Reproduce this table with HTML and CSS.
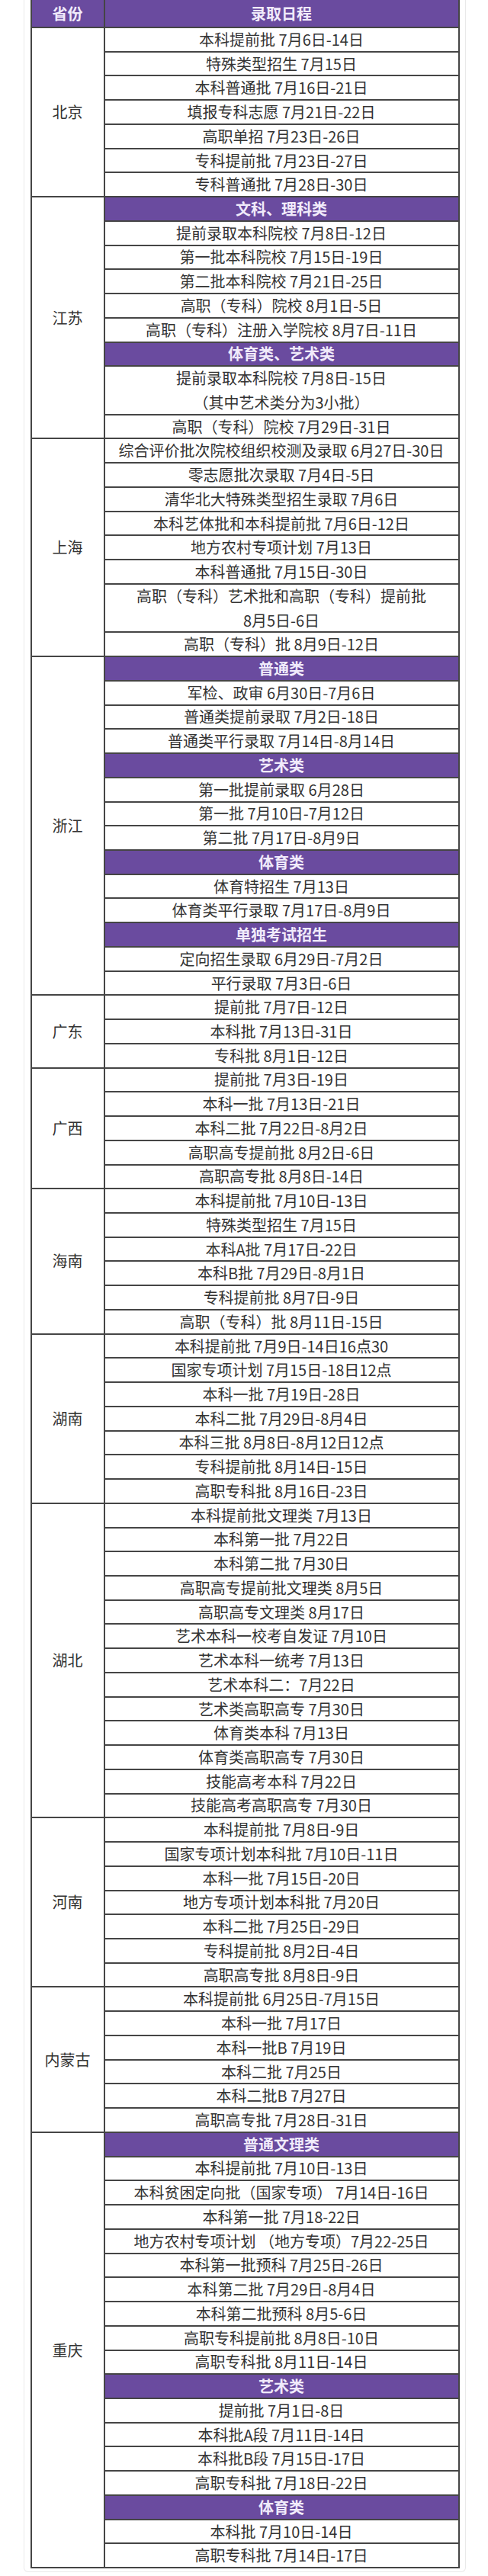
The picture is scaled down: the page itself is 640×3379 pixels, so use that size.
FILE: index.html
```html
<!DOCTYPE html>
<html lang="zh-CN">
<head>
<meta charset="utf-8">
<title>各省录取日程</title>
<link rel="stylesheet" href="styles.css">
</head>
<body>
<div class="card">
  <div class="sheet">
    <div class="h p-h">省份</div>
    <div class="h c-h">录取日程</div>

    <div class="p r7">北京</div>
    <div class="c">本科提前批 7月6日-14日</div>
    <div class="c">特殊类型招生 7月15日</div>
    <div class="c">本科普通批 7月16日-21日</div>
    <div class="c">填报专科志愿 7月21日-22日</div>
    <div class="c">高职单招 7月23日-26日</div>
    <div class="c">专科提前批 7月23日-27日</div>
    <div class="c">专科普通批 7月28日-30日</div>

    <div class="p r10">江苏</div>
    <div class="c sub">文科、理科类</div>
    <div class="c">提前录取本科院校 7月8日-12日</div>
    <div class="c">第一批本科院校 7月15日-19日</div>
    <div class="c">第二批本科院校 7月21日-25日</div>
    <div class="c">高职（专科）院校 8月1日-5日</div>
    <div class="c">高职（专科）注册入学院校 8月7日-11日</div>
    <div class="c sub">体育类、艺术类</div>
    <div class="c dbl">提前录取本科院校 7月8日-15日<br>（其中艺术类分为3小批）</div>
    <div class="c">高职（专科）院校 7月29日-31日</div>

    <div class="p r9">上海</div>
    <div class="c">综合评价批次院校组织校测及录取 6月27日-30日</div>
    <div class="c">零志愿批次录取 7月4日-5日</div>
    <div class="c">清华北大特殊类型招生录取 7月6日</div>
    <div class="c">本科艺体批和本科提前批 7月6日-12日</div>
    <div class="c">地方农村专项计划 7月13日</div>
    <div class="c">本科普通批 7月15日-30日</div>
    <div class="c dbl">高职（专科）艺术批和高职（专科）提前批<br>8月5日-6日</div>
    <div class="c">高职（专科）批 8月9日-12日</div>

    <div class="p r14">浙江</div>
    <div class="c sub">普通类</div>
    <div class="c">军检、政审 6月30日-7月6日</div>
    <div class="c">普通类提前录取 7月2日-18日</div>
    <div class="c">普通类平行录取 7月14日-8月14日</div>
    <div class="c sub">艺术类</div>
    <div class="c">第一批提前录取 6月28日</div>
    <div class="c">第一批 7月10日-7月12日</div>
    <div class="c">第二批 7月17日-8月9日</div>
    <div class="c sub">体育类</div>
    <div class="c">体育特招生 7月13日</div>
    <div class="c">体育类平行录取 7月17日-8月9日</div>
    <div class="c sub">单独考试招生</div>
    <div class="c">定向招生录取 6月29日-7月2日</div>
    <div class="c">平行录取 7月3日-6日</div>

    <div class="p r3">广东</div>
    <div class="c">提前批 7月7日-12日</div>
    <div class="c">本科批 7月13日-31日</div>
    <div class="c">专科批 8月1日-12日</div>

    <div class="p r5">广西</div>
    <div class="c">提前批 7月3日-19日</div>
    <div class="c">本科一批 7月13日-21日</div>
    <div class="c">本科二批 7月22日-8月2日</div>
    <div class="c">高职高专提前批 8月2日-6日</div>
    <div class="c">高职高专批 8月8日-14日</div>

    <div class="p r6">海南</div>
    <div class="c">本科提前批 7月10日-13日</div>
    <div class="c">特殊类型招生 7月15日</div>
    <div class="c">本科A批 7月17日-22日</div>
    <div class="c">本科B批 7月29日-8月1日</div>
    <div class="c">专科提前批 8月7日-9日</div>
    <div class="c">高职（专科）批 8月11日-15日</div>

    <div class="p r7">湖南</div>
    <div class="c">本科提前批 7月9日-14日16点30</div>
    <div class="c">国家专项计划 7月15日-18日12点</div>
    <div class="c">本科一批 7月19日-28日</div>
    <div class="c">本科二批 7月29日-8月4日</div>
    <div class="c">本科三批 8月8日-8月12日12点</div>
    <div class="c">专科提前批 8月14日-15日</div>
    <div class="c">高职专科批 8月16日-23日</div>

    <div class="p r13">湖北</div>
    <div class="c">本科提前批文理类 7月13日</div>
    <div class="c">本科第一批 7月22日</div>
    <div class="c">本科第二批 7月30日</div>
    <div class="c">高职高专提前批文理类 8月5日</div>
    <div class="c">高职高专文理类 8月17日</div>
    <div class="c">艺术本科一校考自发证 7月10日</div>
    <div class="c">艺术本科一统考 7月13日</div>
    <div class="c">艺术本科二：7月22日</div>
    <div class="c">艺术类高职高专 7月30日</div>
    <div class="c">体育类本科 7月13日</div>
    <div class="c">体育类高职高专 7月30日</div>
    <div class="c">技能高考本科 7月22日</div>
    <div class="c">技能高考高职高专 7月30日</div>

    <div class="p r7">河南</div>
    <div class="c">本科提前批 7月8日-9日</div>
    <div class="c">国家专项计划本科批 7月10日-11日</div>
    <div class="c">本科一批 7月15日-20日</div>
    <div class="c">地方专项计划本科批 7月20日</div>
    <div class="c">本科二批 7月25日-29日</div>
    <div class="c">专科提前批 8月2日-4日</div>
    <div class="c">高职高专批 8月8日-9日</div>

    <div class="p r6">内蒙古</div>
    <div class="c">本科提前批 6月25日-7月15日</div>
    <div class="c">本科一批 7月17日</div>
    <div class="c">本科一批B 7月19日</div>
    <div class="c">本科二批 7月25日</div>
    <div class="c">本科二批B 7月27日</div>
    <div class="c">高职高专批 7月28日-31日</div>

    <div class="p r18">重庆</div>
    <div class="c sub">普通文理类</div>
    <div class="c">本科提前批 7月10日-13日</div>
    <div class="c">本科贫困定向批（国家专项） 7月14日-16日</div>
    <div class="c">本科第一批 7月18-22日</div>
    <div class="c">地方农村专项计划 （地方专项）7月22-25日</div>
    <div class="c">本科第一批预科 7月25日-26日</div>
    <div class="c">本科第二批 7月29日-8月4日</div>
    <div class="c">本科第二批预科 8月5-6日</div>
    <div class="c">高职专科提前批 8月8日-10日</div>
    <div class="c">高职专科批 8月11日-14日</div>
    <div class="c sub">艺术类</div>
    <div class="c">提前批 7月1日-8日</div>
    <div class="c">本科批A段 7月11日-14日</div>
    <div class="c">本科批B段 7月15日-17日</div>
    <div class="c">高职专科批 7月18日-22日</div>
    <div class="c sub">体育类</div>
    <div class="c">本科批 7月10日-14日</div>
    <div class="c">高职专科批 7月14日-17日</div>
  </div>
</div>
</body>
</html>
```

FILE: styles.css
```css
html, body {
  margin: 0;
  padding: 0;
  background: #ffffff;
}

body {
  font-family: "Noto Sans CJK SC", "Noto Sans", sans-serif;
  color: #333333;
}

.card {
  width: 578px;
  margin-left: 31px;
  border: 1px solid #e9e9e9;
  border-top: none;
  border-radius: 0 0 6px 6px;
  padding-bottom: 4px;
  display: flex;
  justify-content: center;
}

.sheet {
  width: 559px;
  display: grid;
  grid-template-columns: 94px 1fr;
  grid-template-rows: 35px;
  grid-auto-rows: 29.74px;
  gap: 2px;
  padding: 0 2px 2px 2px;
  background: #454545;
}

.h {
  background: #6a4b9f;
  color: #f1ebfb;
  font-weight: 700;
  font-size: 20px;
  display: flex;
  align-items: center;
  justify-content: center;
  line-height: 1;
}

.p {
  grid-column: 1;
  background: #ffffff;
  font-size: 20px;
  display: flex;
  align-items: center;
  justify-content: center;
  line-height: 1;
}

.c {
  grid-column: 2;
  background: #ffffff;
  font-size: 20px;
  display: flex;
  align-items: center;
  justify-content: center;
  text-align: center;
  white-space: nowrap;
  line-height: 1;
}

.c.sub {
  background: #6a4b9f;
  color: #f1ebfb;
  font-weight: 700;
}

.c.dbl {
  grid-row: span 2;
  line-height: 31.7px;
}

.r3 { grid-row: span 3; }
.r5 { grid-row: span 5; }
.r6 { grid-row: span 6; }
.r7 { grid-row: span 7; }
.r9 { grid-row: span 9; }
.r10 { grid-row: span 10; }
.r13 { grid-row: span 13; }
.r14 { grid-row: span 14; }
.r18 { grid-row: span 18; }
```
